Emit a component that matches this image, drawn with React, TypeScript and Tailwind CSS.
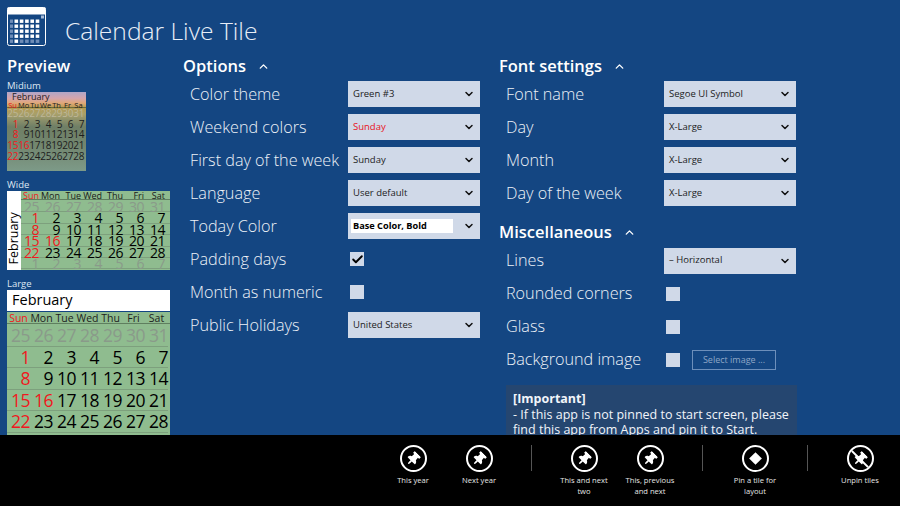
import { ChevronDown, ChevronUp, Check } from "lucide-react";
import { FaThumbtack } from "react-icons/fa";

const days = ["Sun", "Mon", "Tue", "Wed", "Thu", "Fri", "Sat"];
const shortDays = ["Su", "Mo", "Tu", "We", "Th", "Fr", "Sa"];
const padding = [25, 26, 27, 28, 29, 30, 31];
const weeks = [
  [1, 2, 3, 4, 5, 6, 7],
  [8, 9, 10, 11, 12, 13, 14],
  [15, 16, 17, 18, 19, 20, 21],
  [22, 23, 24, 25, 26, 27, 28],
];
const after = [1, 2, 3, 4, 5, 6, 7];
const redDays = [1, 8, 15, 16, 22];

const optionRows = [
  { label: "Color theme", value: "Green #3" },
  { label: "Weekend colors", value: "Sunday", red: true },
  { label: "First day of the week", value: "Sunday" },
  { label: "Language", value: "User default" },
  { label: "Today Color", value: "Base Color, Bold", highlight: true },
  { label: "Padding days", checked: true },
  { label: "Month as numeric", checked: false },
  { label: "Public Holidays", value: "United States" },
];

const fontRows = [
  { label: "Font name", value: "Segoe UI Symbol" },
  { label: "Day", value: "X-Large" },
  { label: "Month", value: "X-Large" },
  { label: "Day of the week", value: "X-Large" },
];

function Select({ value, red, highlight }: { value: string; red?: boolean; highlight?: boolean }) {
  return (
    <div className="w-[132px] h-[26px] bg-[#d0d9e8] flex items-center pl-[3px] pr-[5px] justify-between">
      <span
        className={
          highlight
            ? "w-[102px] h-[14px] bg-white pl-[2px] text-[9.2px] leading-[14px] font-bold text-black"
            : red
              ? "pl-[2px] text-[9.5px] text-[#e81123]"
              : "pl-[2px] text-[9.5px] text-[#1c1c1c]"
        }
      >
        {value}
      </span>
      <ChevronDown size={12} strokeWidth={3} className="text-[#111]" />
    </div>
  );
}

function CheckBox({ checked }: { checked?: boolean }) {
  return (
    <div className="ml-[2px] w-[14px] h-[14px] bg-[#d0d9e8] flex items-center justify-center">
      {checked && <Check size={13} strokeWidth={3.5} className="text-black" />}
    </div>
  );
}

function Heading({ text, chevron }: { text: string; chevron?: boolean }) {
  return (
    <div className="h-[22.5px] flex items-center gap-[11px]">
      <span className="text-[16.5px] font-semibold text-white">{text}</span>
      {chevron && <ChevronUp size={13} strokeWidth={2.5} className="text-white" />}
    </div>
  );
}

function Row({ label, children }: { label: string; children?: React.ReactNode }) {
  return (
    <div className="h-[33px] flex items-center pl-[7px]">
      <span className="w-[158px] shrink-0 whitespace-nowrap text-[16.2px] font-light text-[#eef2f8]">{label}</span>
      {children}
    </div>
  );
}

function MediumTile() {
  return (
    <div className="w-[79px] h-[79px] overflow-hidden bg-[linear-gradient(180deg,#b0a6c8_0%,#d6a5ac_8%,#e0a878_14%,#b59a50_20%,#a8a06a_28%,#8b8f6a_36%,#6f7f66_44%,#72866f_68%,#7d9a88_100%)] text-[10px] leading-[10.7px] text-[#1d1d1d]">
      <div className="pl-[5px] h-[10px] text-[9px] leading-[10px]">February</div>
      <div className="grid grid-cols-[repeat(7,11px)] text-[7.5px] h-[6px] leading-[6px] border-b border-[#6b6b3a]">
        {shortDays.map((d, i) => (
          <span key={d} className={i === 0 ? "text-center text-[#e8141c]" : "text-center"}>
            {d}
          </span>
        ))}
      </div>
      <div className="grid grid-cols-[repeat(7,11px)] tracking-[-0.4px]">
        {padding.map((n) => (
          <span key={n} className="text-right text-[#bdb698]">
            {n}
          </span>
        ))}
        {weeks.flat().map((n) => (
          <span key={n} className={redDays.includes(n) ? "text-right text-[#f01820]" : "text-right"}>
            {n}
          </span>
        ))}
      </div>
    </div>
  );
}

function WideTile() {
  return (
    <div className="w-[163px] h-[79px] flex overflow-hidden">
      <div className="w-[14px] bg-white flex items-center justify-center">
        <span className="-rotate-90 translate-y-[8px] text-[12.5px] text-black whitespace-nowrap">February</span>
      </div>
      <div className="flex-1 bg-[#8fbc8f]">
        <div className="grid grid-cols-[18px_repeat(6,21px)] h-[9px] border-b border-[#5f7f5f] text-[9px] leading-[9px] text-[#1a1a1a]">
          {days.map((d, i) => (
            <span key={d} className={i === 0 ? "text-right text-[#f01820]" : "text-right"}>
              {d}
            </span>
          ))}
        </div>
        <div className="grid grid-cols-[18px_repeat(6,21px)] text-[14px] leading-[11.4px] mt-[1px] tracking-[-0.5px] bg-[repeating-linear-gradient(180deg,transparent_0,transparent_10.4px,#7da07d_10.4px,#7da07d_11.4px)]">
          {padding.map((n) => (
            <span key={n} className="text-right text-[#8a9a8a]">{n}</span>
          ))}
          {weeks.flat().map((n) => (
            <span key={n} className={redDays.includes(n) ? "text-right text-[#f01820]" : "text-right text-black"}>
              {n}
            </span>
          ))}
          {after.map((n) => (
            <span key={n} className="text-right text-[#8a9a8a]">{n}</span>
          ))}
        </div>
      </div>
    </div>
  );
}

function LargeTile() {
  return (
    <div className="w-[163px]">
      <div className="h-[21px] bg-white pl-[5px] text-[14.5px] leading-[20px] text-black">February</div>
      <div className="mt-[1px] h-[130px] bg-[#8fbc8f]">
        <div className="grid grid-cols-[repeat(7,23px)] h-[12px] text-[10.5px] leading-[12px] text-[#1d1d1d] border-b border-[#5f7f5f]">
          {days.map((d, i) => (
            <span key={d} className={i === 0 ? "text-center text-[#f01820]" : "text-center"}>
              {d}
            </span>
          ))}
        </div>
        <div className="grid grid-cols-[repeat(7,23px)] mt-[1px]">
          {padding.map((n) => (
            <span key={n} className="text-right h-[21.5px] border-b border-[#7da07d] text-[17.5px] leading-[21px] tracking-[-0.5px] text-[#8a9a8a]">
              {n}
            </span>
          ))}
          {weeks.flat().map((n) => (
            <span
              key={n}
              className={
                redDays.includes(n)
                  ? "text-right h-[21.5px] border-b border-[#7da07d] text-[17.5px] leading-[21px] tracking-[-0.5px] text-[#f01820]"
                  : "text-right h-[21.5px] border-b border-[#7da07d] text-[17.5px] leading-[21px] tracking-[-0.5px] text-black"
              }
            >
              {n}
            </span>
          ))}
        </div>
      </div>
    </div>
  );
}

function CalendarLogo() {
  const cols = [0, 1, 2, 3, 4];
  const rows = [0, 1, 2, 3, 4];
  return (
    <svg width="39" height="39" viewBox="0 0 39 39">
      <rect x="0.5" y="0.5" width="38" height="38" rx="2" fill="none" stroke="#fff" />
      <rect x="0.5" y="0.5" width="38" height="7" fill="#fff" />
      <rect x="34" y="8.5" width="3" height="3" fill="#a9bcd8" />
      {rows.map((r) => (
        <rect key={r} x="3" y={12.5 + r * 5} width="3" height="3.4" fill="#6f8db8" />
      ))}
      {rows.map((r) =>
        cols.map((c) => (
          <rect
            key={`${r}-${c}`}
            x={7.5 + c * 5.3}
            y={12.5 + r * 5}
            width="3.6"
            height="3.4"
            fill={r === 4 && c > 0 ? "#6f8db8" : "#fff"}
          />
        ))
      )}
    </svg>
  );
}

function PinIcon({ kind }: { kind?: "diamond" | "unpin" }) {
  return (
    <div className="relative w-[27px] h-[27px] rounded-full border-2 border-white flex items-center justify-center overflow-hidden">
      {kind === "diamond" ? (
        <div className="w-[9px] h-[9px] bg-white rotate-45" />
      ) : (
        <FaThumbtack size={14} className="text-white rotate-45" />
      )}
      {kind === "unpin" && <div className="absolute w-[30px] h-[2px] bg-white rotate-45" />}
    </div>
  );
}

function BarItem({ label, kind }: { label: string; kind?: "diamond" | "unpin" }) {
  return (
    <div className="w-[66px] flex flex-col items-center">
      <PinIcon kind={kind} />
      <span className="mt-[3px] w-[54px] text-center text-[7.6px] leading-[11px] text-[#e6e6e6]">{label}</span>
    </div>
  );
}

function Separator() {
  return <div className="mx-[19px] w-px h-[26px] bg-[#555]" />;
}

export default function App() {
  return (
    <div className="w-[900px] h-[506px] flex flex-col overflow-hidden bg-[#144682] font-['Open_Sans',sans-serif]">
      <header className="h-[50px] shrink-0 pl-[7px] pt-[7px] flex items-start">
        <CalendarLogo />
        <h1 className="ml-[19px] mt-[7px] text-[24.6px] leading-[34px] font-light text-[#e8eef7]">Calendar Live Tile</h1>
      </header>

      <main className="flex-1 min-h-0 overflow-hidden flex pl-[7px] pt-[5px]">
        <div className="w-[176px] shrink-0">
          <Heading text="Preview" />
          <div className="mt-[0.5px] h-[14px] text-[9.5px] leading-[16px] text-[#dfe7f2]">Midium</div>
          <MediumTile />
          <div className="mt-[6px] h-[14px] text-[9.5px] leading-[16px] text-[#dfe7f2]">Wide</div>
          <WideTile />
          <div className="mt-[6px] h-[14px] text-[9.5px] leading-[16px] text-[#dfe7f2]">Large</div>
          <LargeTile />
        </div>

        <div className="w-[316px] shrink-0">
          <Heading text="Options" chevron />
          {optionRows.map((r) => (
            <Row key={r.label} label={r.label}>
              {r.value ? <Select value={r.value} red={r.red} highlight={r.highlight} /> : <CheckBox checked={r.checked} />}
            </Row>
          ))}
        </div>

        <div className="w-[300px] shrink-0">
          <Heading text="Font settings" chevron />
          {fontRows.map((r) => (
            <Row key={r.label} label={r.label}>
              <Select value={r.value} />
            </Row>
          ))}
          <div className="mt-[12px]">
            <Heading text="Miscellaneous" chevron />
          </div>
          <Row label="Lines">
            <Select value="–  Horizontal" />
          </Row>
          <Row label="Rounded corners">
            <CheckBox />
          </Row>
          <Row label="Glass">
            <CheckBox />
          </Row>
          <Row label="Background image">
            <CheckBox />
            <button className="ml-[12px] w-[84px] h-[20px] border border-[#6d8fbb] text-[9px] text-[#8fa6c6]">Select image ...</button>
          </Row>
          <div className="mt-[9px] ml-[7px] w-[291px] h-[70px] bg-[#254670] pl-[7px] pt-[6px] text-[12.5px] leading-[15.5px] text-[#f2f5fa]">
            <div className="font-bold">[Important]</div>
            <div>- If this app is not pinned to start screen, please</div>
            <div>find this app from Apps and pin it to Start.</div>
          </div>
        </div>
      </main>

      <footer className="h-[71px] shrink-0 bg-black flex justify-end pr-[7px] pt-[10px] items-start">
        <BarItem label="This year" />
        <BarItem label="Next year" />
        <Separator />
        <BarItem label="This and next two" />
        <BarItem label="This, previous and next" />
        <Separator />
        <BarItem label="Pin a tile for layout" kind="diamond" />
        <Separator />
        <BarItem label="Unpin tiles" kind="unpin" />
      </footer>
    </div>
  );
}
